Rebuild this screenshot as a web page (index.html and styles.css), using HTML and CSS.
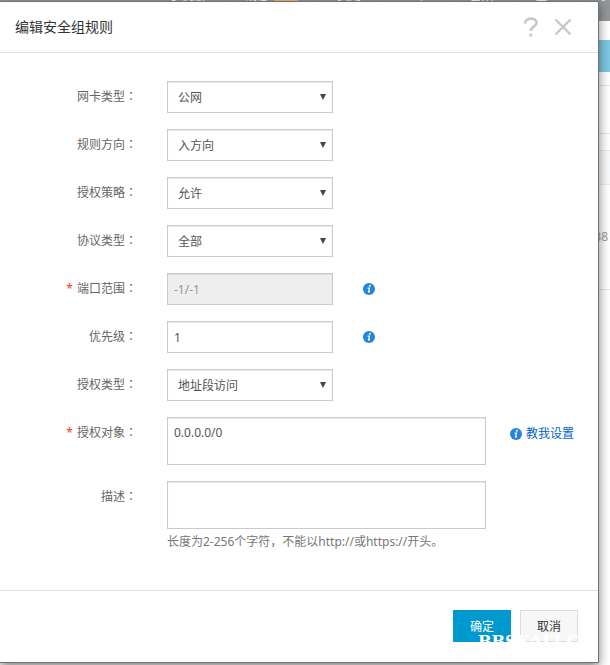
FILE: index.html
```html
<!DOCTYPE html>
<html lang="zh-CN">
<head>
<meta charset="utf-8">
<title>编辑安全组规则</title>
<link rel="stylesheet" href="styles.css">
</head>
<body>
<div class="page" aria-hidden="true">
  <div class="topnav">
    <span class="nav-item nav-wide">手机版</span>
    <span class="nav-item nav-msg">消息<b class="badge">99+</b></span>
    <span class="nav-item">费用</span>
    <span class="nav-item">工单</span>
    <span class="nav-item">备案</span>
    <span class="nav-item">企业</span>
    <span class="nav-item">支持</span>
  </div>
  <div class="page-action"></div>
  <div class="page-tabs"></div>
  <div class="page-head"></div>
  <div class="page-row">38</div>
</div>

<section class="dialog" role="dialog" aria-labelledby="dialog-title">
  <header class="dialog-header">
    <h1 id="dialog-title">编辑安全组规则</h1>
    <button class="icon-button" type="button" aria-label="帮助">
      <svg width="16" height="20" viewBox="0 0 16 20" fill="none" stroke="#c8c8c8" stroke-width="2.6"><path d="M2 6.5C2 3.5 4.4 1.6 7.8 1.6S13.6 3.3 13.6 6C13.6 9.4 7.8 9.6 7.8 14"/><path d="M7.8 16.6V19.6"/></svg>
    </button>
    <button class="icon-button" type="button" aria-label="关闭">
      <svg width="18" height="18" viewBox="0 0 18 18" fill="none" stroke="#c8c8c8" stroke-width="2.4"><path d="M1.5 1.5L16.5 16.5M16.5 1.5L1.5 16.5"/></svg>
    </button>
  </header>

  <form>
    <div class="fields">
      <div class="row">
        <label for="nic">网卡类型<span class="colon" lang="zh-TW">：</span></label>
        <div class="select"><select id="nic"><option>公网</option></select></div>
      </div>
      <div class="row">
        <label for="direction">规则方向<span class="colon" lang="zh-TW">：</span></label>
        <div class="select"><select id="direction"><option>入方向</option></select></div>
      </div>
      <div class="row">
        <label for="policy">授权策略<span class="colon" lang="zh-TW">：</span></label>
        <div class="select"><select id="policy"><option>允许</option></select></div>
      </div>
      <div class="row">
        <label for="protocol">协议类型<span class="colon" lang="zh-TW">：</span></label>
        <div class="select"><select id="protocol"><option>全部</option></select></div>
      </div>
      <div class="row">
        <label for="port"><span class="required">*</span>端口范围<span class="colon" lang="zh-TW">：</span></label>
        <input id="port" type="text" value="-1/-1" disabled>
        <svg class="info" width="12" height="12" viewBox="0 0 12 12"><circle cx="6" cy="6" r="6" fill="#2384dc"/><circle cx="6.9" cy="2.8" r="1" fill="#fff"/><path d="M4.6 5.2H6.5L5.5 9.1Q5.8 9.3 7 8.6" fill="none" stroke="#fff" stroke-width="1.2"/></svg>
      </div>
      <div class="row">
        <label for="priority">优先级<span class="colon" lang="zh-TW">：</span></label>
        <input id="priority" type="text" value="1">
        <svg class="info" width="12" height="12" viewBox="0 0 12 12"><circle cx="6" cy="6" r="6" fill="#2384dc"/><circle cx="6.9" cy="2.8" r="1" fill="#fff"/><path d="M4.6 5.2H6.5L5.5 9.1Q5.8 9.3 7 8.6" fill="none" stroke="#fff" stroke-width="1.2"/></svg>
      </div>
      <div class="row">
        <label for="auth-type">授权类型<span class="colon" lang="zh-TW">：</span></label>
        <div class="select"><select id="auth-type"><option>地址段访问</option></select></div>
      </div>
      <div class="row">
        <label for="target"><span class="required">*</span>授权对象<span class="colon" lang="zh-TW">：</span></label>
        <textarea id="target">0.0.0.0/0</textarea>
        <a class="teach" href="#"><svg width="12" height="12" viewBox="0 0 12 12"><circle cx="6" cy="6" r="6" fill="#2384dc"/><circle cx="6.9" cy="2.8" r="1" fill="#fff"/><path d="M4.6 5.2H6.5L5.5 9.1Q5.8 9.3 7 8.6" fill="none" stroke="#fff" stroke-width="1.2"/></svg>教我设置</a>
      </div>
      <div class="row">
        <label for="description">描述<span class="colon" lang="zh-TW">：</span></label>
        <div class="stack">
          <textarea id="description"></textarea>
          <p class="hint">长度为2-256个字符，不能以http://或https://开头。</p>
        </div>
      </div>
    </div>
    <footer class="dialog-footer">
      <button class="button primary" type="button">确定</button>
      <button class="button" type="button">取消</button>
      <span class="watermark">BBSKALI.CN</span>
    </footer>
  </form>
</section>
</body>
</html>
```
FILE: styles.css
```css
* {
  box-sizing: border-box;
}

body {
  margin: 0;
  overflow: hidden;
  background: #fff;
  color: #666;
  font: 12px/18px "Noto Sans", "Noto Sans CJK SC", sans-serif;
}

/* Page behind the dialog */
.page {
  overflow: hidden;
}

.topnav {
  display: flex;
  height: 50px;
  margin: -29px -36px 0 0;
  justify-content: flex-end;
  background: #94979a;
  color: #fff;
  line-height: 50px;
}

.nav-item {
  flex: none;
  width: 66px;
  border-left: 1px solid #85888b;
  text-align: center;
}

.nav-wide {
  width: 78px;
  border-left: 0;
}

.nav-msg {
  width: 90px;
}

.badge {
  display: inline-block;
  width: 24px;
  height: 16px;
  margin-left: 4px;
  background: #f5b55d;
  font-weight: 400;
  font-size: 11px;
  line-height: 16px;
}

.page-action {
  height: 32px;
  margin-top: 19px;
  background: #7ec8e3;
}

.page-tabs {
  height: 49px;
  margin-top: 13px;
  border: solid #e8e8e8;
  border-width: 1px 0;
}

.page-head {
  height: 35px;
  margin-top: 16px;
  border: solid #e8ecf0;
  border-width: 1px 0;
  background: #f7f9fb;
}

.page-row {
  height: 105px;
  padding-right: 2px;
  border-bottom: 1px solid #e8e8e8;
  color: #999;
  line-height: 104px;
  text-align: right;
}

/* Dialog */
.dialog {
  position: absolute;
  top: 1px;
  left: 0;
  right: 11px;
  border: solid #707274;
  border-width: 1px 1px 1px 0;
  background: #fff;
  box-shadow: 0 4px 10px rgba(0, 0, 0, 0.5);
}

.dialog-header {
  display: flex;
  align-items: center;
  gap: 15px;
  height: 51px;
  padding: 0 26px 0 15px;
  border-bottom: 1px solid #e1e1e1;
}

h1 {
  flex: 1;
  margin: 0;
  color: #333;
  font-size: 14px;
  font-weight: 400;
}

.icon-button {
  display: flex;
  padding: 0;
  border: 0;
  background: none;
}

form {
  margin: 0;
}

.fields {
  display: flex;
  flex-direction: column;
  gap: 16px;
  padding: 28px 0 39px;
}

.row {
  display: flex;
  align-items: flex-start;
}

.row > label {
  flex: none;
  width: 137px;
  margin-right: 30px;
  line-height: 32px;
  text-align: right;
}

.colon {
  font-family: "Noto Sans CJK TC", sans-serif;
  line-height: 1;
}

.required {
  margin-right: 4px;
  color: #f04020;
}

input,
select,
textarea {
  display: block;
  width: 166px;
  height: 32px;
  margin: 0;
  padding: 0 6px;
  border: 1px solid #c8cacc;
  border-radius: 0;
  background: #fff;
  box-shadow: inset 0 1px 1px rgba(0, 0, 0, 0.08);
  color: #555;
  font: inherit;
}

select {
  appearance: none;
  padding: 2px 10px 0;
}

input:disabled {
  background: #eee;
  color: #999;
}

textarea {
  width: 319px;
  height: 48px;
  padding: 6px;
  resize: none;
}

.select {
  position: relative;
}

.select::after {
  content: "";
  position: absolute;
  top: 13px;
  right: 7px;
  border: solid transparent;
  border-width: 6px 3px 0;
  border-top-color: #444;
  pointer-events: none;
}

.info {
  margin: 10px 0 0 30px;
}

.teach {
  display: flex;
  align-items: center;
  gap: 4px;
  margin-left: 24px;
  color: #06c;
  line-height: 34px;
  text-decoration: none;
}

.hint {
  margin: 4px 0 0;
  color: #777;
}

.dialog-footer {
  position: relative;
  display: flex;
  justify-content: flex-end;
  gap: 9px;
  padding: 19px 20px 20px;
  border-top: 1px solid #e1e1e1;
}

.button {
  width: 58px;
  height: 32px;
  padding: 2px 0 0;
  border: 1px solid #ddd;
  background: #f7f7f7;
  color: #333;
  font: inherit;
}

.primary {
  border-color: #0099cf;
  background: #0099cf;
  color: #fff;
}

.watermark {
  position: absolute;
  left: calc(100% - 120px);
  bottom: 10px;
  color: #fff;
  font: bold 16px/20px "DejaVu Serif", serif;
  pointer-events: none;
}
```
